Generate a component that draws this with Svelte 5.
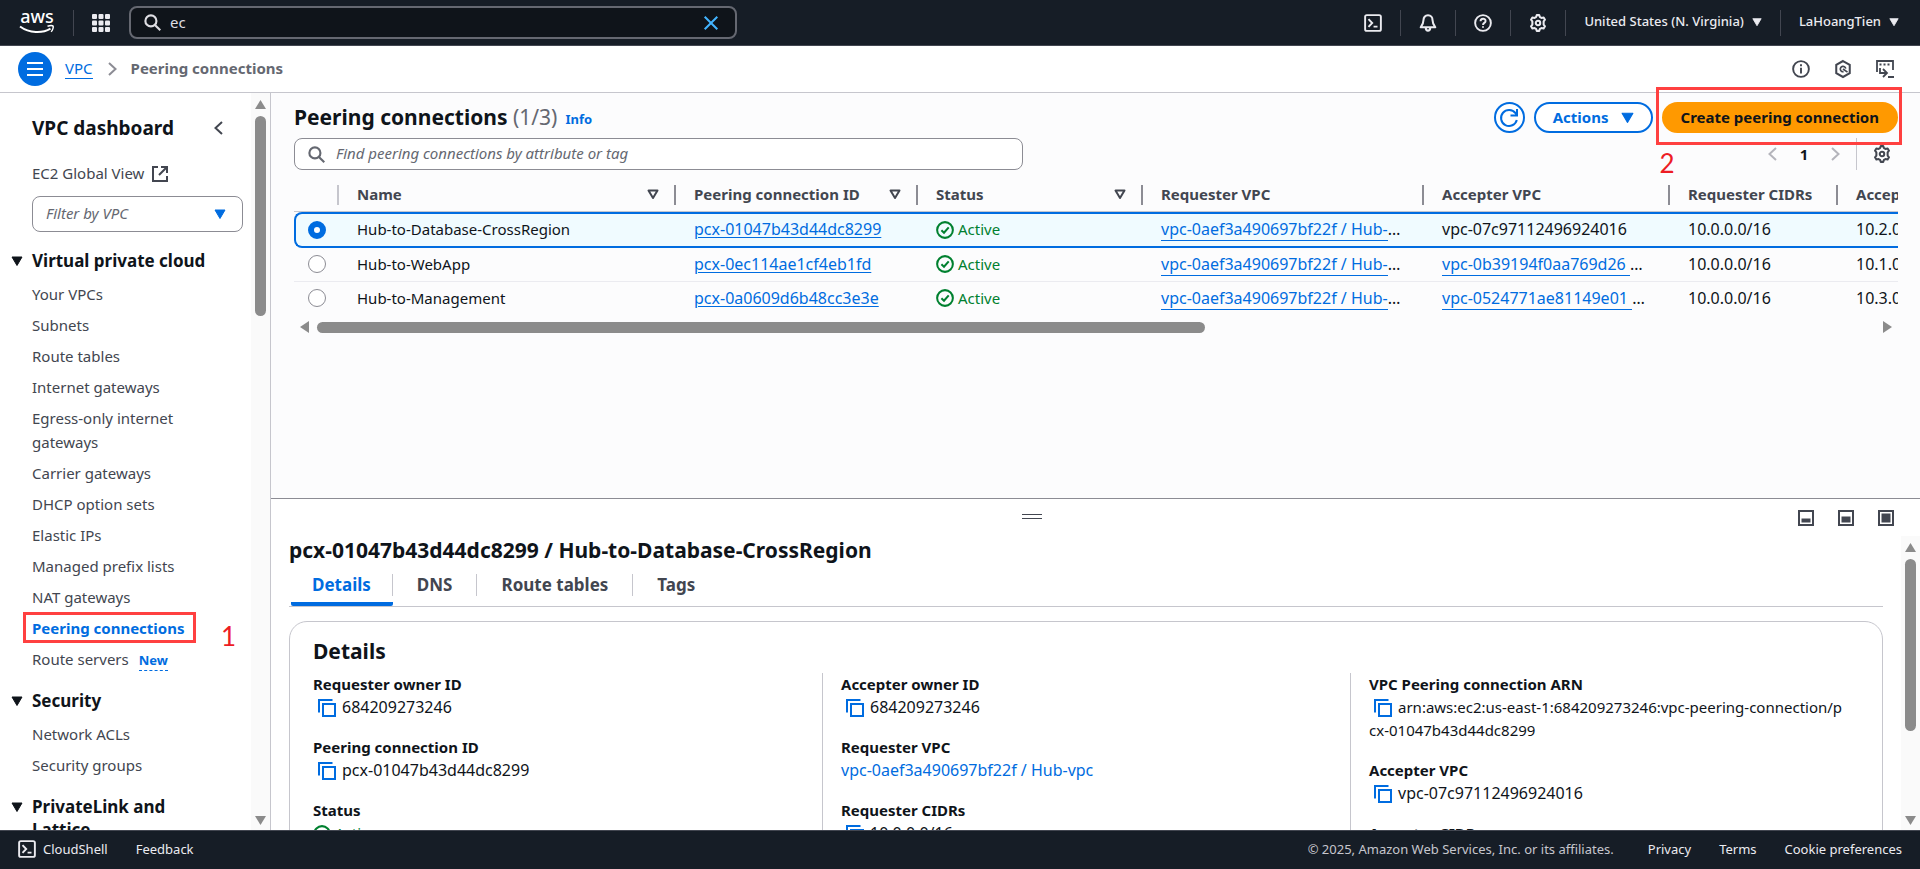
<script>
  const vpcLinks = [
    'Your VPCs', 'Subnets', 'Route tables', 'Internet gateways', 'Egress-only internet gateways',
    'Carrier gateways', 'DHCP option sets', 'Elastic IPs', 'Managed prefix lists', 'NAT gateways',
    'Peering connections', 'Route servers'
  ];
  const securityLinks = ['Network ACLs', 'Security groups'];
  const rows = [
    { name: 'Hub-to-Database-CrossRegion', id: 'pcx-01047b43d44dc8299', accepter: 'vpc-07c97112496924016', linked: false, cidr: '10.2.0.0/16' },
    { name: 'Hub-to-WebApp', id: 'pcx-0ec114ae1cf4eb1fd', accepter: 'vpc-0b39194f0aa769d26', linked: true, cidr: '10.1.0.0/16' },
    { name: 'Hub-to-Management', id: 'pcx-0a0609d6b48cc3e3e', accepter: 'vpc-0524771ae81149e01', linked: true, cidr: '10.3.0.0/16' }
  ];
  const columns = [
    { label: 'Name', sort: true },
    { label: 'Peering connection ID', sort: true },
    { label: 'Status', sort: true },
    { label: 'Requester VPC' },
    { label: 'Accepter VPC' },
    { label: 'Requester CIDRs' },
    { label: 'Accepter CIDRs' }
  ];
  const tabs = ['Details', 'DNS', 'Route tables', 'Tags'];
  const details = [
    [
      { label: 'Requester owner ID', value: '684209273246', kind: 'copy' },
      { label: 'Peering connection ID', value: 'pcx-01047b43d44dc8299', kind: 'copy' },
      { label: 'Status', value: 'Active', kind: 'status' }
    ],
    [
      { label: 'Accepter owner ID', value: '684209273246', kind: 'copy' },
      { label: 'Requester VPC', value: 'vpc-0aef3a490697bf22f / Hub-vpc', kind: 'link' },
      { label: 'Requester CIDRs', value: '10.0.0.0/16', kind: 'copy' }
    ],
    [
      { label: 'VPC Peering connection ARN', value: 'arn:aws:ec2:us-east-1:684209273246:vpc-peering-connection/pcx-01047b43d44dc8299', kind: 'copy', long: true },
      { label: 'Accepter VPC', value: 'vpc-07c97112496924016', kind: 'copy' },
      { label: 'Accepter CIDRs', value: '10.2.0.0/16', kind: 'copy' }
    ]
  ];
  let selected = $state(0);
  let query = $state('ec');
  let tab = $state('Details');
</script>

{#snippet gear()}
  <svg class="icon" viewBox="0 0 16 16" fill="none" stroke="currentColor" stroke-width="1.8" stroke-linejoin="round">
    <path d="M6.300 2.700 6.900 1h2.200l.6 1.700 1.400.8 1.900-.4 1.200 2L13 6.600v2.800l1.200 1.500-1.200 2-1.900-.4-1.400.8-.6 1.700H6.900l-.6-1.700-1.400-.8-1.900.4-1.200-2L3 9.400V6.600L1.800 5.100 3 3.100l1.900.4z" />
    <circle cx="8" cy="8" r="2" />
  </svg>
{/snippet}

{#snippet shell()}
  <svg class="icon" viewBox="0 0 16 16" fill="none" stroke="currentColor" stroke-width="1.7">
    <rect x="1" y="1" width="14" height="14" rx="1.5" />
    <path d="M4 4.500 7.300 8 4 11.500M8.500 11.200H12" />
  </svg>
{/snippet}

{#snippet glass()}
  <svg class="icon" viewBox="0 0 16 16" fill="none" stroke="currentColor" stroke-width="2">
    <circle cx="6.500" cy="6.500" r="5.200" />
    <path d="m10.300 10.300 5 5" />
  </svg>
{/snippet}

{#snippet caret(w)}
  <svg width={w} height={w} viewBox="0 0 12 12" fill="currentColor" stroke="currentColor" stroke-linejoin="round"><path d="M1 2h10L6 10.500z" /></svg>
{/snippet}

{#snippet check()}
  <svg class="icon" viewBox="0 0 16 16" fill="none" stroke="currentColor" stroke-width="1.8">
    <circle cx="8" cy="8" r="7" />
    <path d="m4.800 8.200 2.300 2.200 4.200-4.800" />
  </svg>
{/snippet}

{#snippet copy()}
  <button class="copy" aria-label="Copy">
    <svg class="icon" viewBox="0 0 18 18" fill="none" stroke="currentColor" stroke-width="2">
      <path d="M1 13.500V1h13.500" />
      <rect x="5" y="5" width="12" height="12" />
    </svg>
  </button>
{/snippet}

{#snippet vbar()}
  <div class="vbar" aria-hidden="true">
    <svg width="13" height="11" viewBox="0 0 13 11"><path d="M6.500 1 12 10H1z" /></svg>
    <i></i>
    <svg width="13" height="11" viewBox="0 0 13 11"><path d="M6.500 10 12 1H1z" /></svg>
  </div>
{/snippet}

<div class="app">
  <header class="top">
    <a class="aws" href="#home" aria-label="AWS home">
      <svg width="36" height="24" viewBox="0 0 36 24">
        <text x="18" y="12" text-anchor="middle" font-size="18" font-weight="500" fill="#fff">aws</text>
        <path d="M1 15.500c9.500 7 22.500 7 30.500 2.200" fill="none" stroke="#fff" stroke-width="2" />
        <path d="M28.500 15.300c2.500-.9 5-.8 5.600-.2.500.8-.3 4-2 5.700" fill="none" stroke="#fff" stroke-width="1.5" />
      </svg>
    </a>
    <span class="sep"></span>
    <button class="apps" aria-label="Services">
      <svg width="18" height="18" viewBox="0 0 18 18" fill="currentColor">
        {#each [0, 6.5, 13] as y}{#each [0, 6.5, 13] as x}<rect {x} {y} width="5" height="5" rx="1" />{/each}{/each}
      </svg>
    </button>
    <label class="global-search">
      {@render glass()}
      <input type="text" aria-label="Search" bind:value={query} />
      <button aria-label="Clear search">
        <svg width="14" height="14" viewBox="0 0 14 14" stroke="currentColor" stroke-width="2"><path d="m.7.7 12.600 12.600M13.300.7.7 13.300" /></svg>
      </button>
    </label>
    <nav class="utilities">
      <button aria-label="CloudShell">{@render shell()}</button>
      <span class="sep"></span>
      <button aria-label="Notifications">
        <svg class="icon" viewBox="0 0 16 16" fill="none" stroke="currentColor" stroke-width="1.8" stroke-linejoin="round">
          <path d="M8 1.200c-2.600 0-4 1.800-4 4.200 0 3-.8 4.200-2.500 6.400h13C12.800 9.600 12 8.400 12 5.400c0-2.400-1.400-4.200-4-4.200zM6 12.300c.2 3.300 3.800 3.300 4 0" />
        </svg>
      </button>
      <span class="sep"></span>
      <button aria-label="Support">
        <svg class="icon" viewBox="0 0 16 16" fill="none" stroke="currentColor" stroke-width="1.7">
          <circle cx="8" cy="8" r="7" />
          <path d="M5.800 6.500C5.800 3.500 10.300 3.600 10.300 6.200 10.300 7.900 8 7.900 8 9.700M8 10.800v1.500" />
        </svg>
      </button>
      <span class="sep"></span>
      <button aria-label="Settings">{@render gear()}</button>
      <span class="sep"></span>
      <button class="menu">United States (N. Virginia) {@render caret(10)}</button>
      <span class="sep"></span>
      <button class="menu">LaHoangTien {@render caret(10)}</button>
    </nav>
  </header>

  <div class="crumbs">
    <button class="burger" aria-label="Open navigation">
      <svg width="16" height="14" viewBox="0 0 16 14" stroke="currentColor" stroke-width="2"><path d="M0 1h16M0 7h16M0 13h16" /></svg>
    </button>
    <a href="#vpc">VPC</a>
    <svg class="chevron" width="9" height="14" viewBox="0 0 9 14"><path d="m1 1 6.500 6L1 13" /></svg>
    <b>Peering connections</b>
    <div class="tools">
      <button aria-label="Info">
        <svg class="icon" viewBox="0 0 16 16" fill="none" stroke="currentColor" stroke-width="1.7"><circle cx="8" cy="8" r="7" /><path d="M8 3.800v1.700M8 6.800v5.200" /></svg>
      </button>
      <button aria-label="Amazon Q">
        <svg class="icon" viewBox="0 0 16 16" fill="none" stroke="currentColor" stroke-width="1.8"><path d="M8 .9 14 4.300v7.400L8 15.100 2 11.700V4.300z" /><path d="M8.500 10.400a2.400 2.400 0 1 1 1.900-2.700M8 8l4 2.800" stroke-width="1.5" /></svg>
      </button>
      <button aria-label="CloudShell drawer">
        <svg class="icon" viewBox="0 0 18 18" fill="none" stroke="currentColor" stroke-width="1.8"><path d="M1 12V1h16v9M3.500 4.500h2M7.500 4.500h2M11.500 4.500h2M4 8v5h6M7 9l4 4-4 4M12 17h6" /></svg>
      </button>
    </div>
  </div>

  <div class="body">
    <aside>
      <div class="side">
        <div class="side-head">
          <h2>VPC dashboard</h2>
          <button aria-label="Close navigation"><svg class="chevron" width="9" height="14" viewBox="0 0 9 14"><path d="M8 1 1.500 7 8 13" /></svg></button>
        </div>
        <a class="global" href="#global">EC2 Global View
          <svg width="16" height="16" viewBox="0 0 16 16" fill="none" stroke="currentColor" stroke-width="2"><path d="M6 1H1v14h14v-5M9 1h6v6M14.500 1.500 7 9" /></svg>
        </a>
        <button class="filter"><i>Filter by VPC</i>{@render caret(12)}</button>
        <h3>{@render caret(12)}Virtual private cloud</h3>
        <ul>
          {#each vpcLinks as item}
            <li class:current={item === 'Peering connections'}>
              <a href="#nav">{item}</a>
              {#if item === 'Route servers'}<button class="new">New</button>{/if}
              {#if item === 'Peering connections'}<span class="mark box"></span><span class="mark one">1</span>{/if}
            </li>
          {/each}
        </ul>
        <h3>{@render caret(12)}Security</h3>
        <ul>
          {#each securityLinks as item}<li><a href="#nav">{item}</a></li>{/each}
        </ul>
        <h3>{@render caret(12)}PrivateLink and Lattice</h3>
      </div>
      {@render vbar()}
    </aside>

    <main>
      <section class="list">
        <div class="head">
          <h1>Peering connections <span>(1/3)</span></h1>
          <a class="info" href="#info">Info</a>
          <div class="actions">
            <button class="pill round" aria-label="Refresh">
              <svg width="20" height="20" viewBox="0 0 20 20" fill="none" stroke="currentColor" stroke-width="2"><path d="M17.800 12A8 8 0 1 1 16.500 5.200L18 7M18 1v6.500h-6.500" /></svg>
            </button>
            <button class="pill">Actions {@render caret(13)}</button>
            <div class="primary-wrap">
              <button class="pill primary">Create peering connection</button>
              <span class="mark box"></span><span class="mark two">2</span>
            </div>
          </div>
        </div>
        <div class="tool-row">
          <label class="search">{@render glass()}<input type="text" aria-label="Find peering connections" placeholder="Find peering connections by attribute or tag" /></label>
          <div class="pager">
            <button aria-label="Previous page"><svg class="chevron" width="9" height="14" viewBox="0 0 9 14"><path d="M8 1 1.500 7 8 13" /></svg></button>
            <button class="page">1</button>
            <button aria-label="Next page"><svg class="chevron" width="9" height="14" viewBox="0 0 9 14"><path d="m1 1 6.500 6L1 13" /></svg></button>
            <span class="line"></span>
            <button class="prefs" aria-label="Preferences">{@render gear()}</button>
          </div>
        </div>
        <div class="table-wrap">
          <table>
            <colgroup><col class="c0" /><col class="c1" /><col class="c2" /><col class="c3" /><col class="c4" /><col class="c5" /><col class="c6" /><col class="c7" /></colgroup>
            <thead>
              <tr>
                <th aria-label="Selection"></th>
                {#each columns as col}
                  <th><div>{col.label}
                    {#if col.sort}<svg width="12" height="11" viewBox="0 0 12 11" fill="none" stroke="currentColor" stroke-width="2" stroke-linejoin="round"><path d="M1.500 1.500h9L6 9z" /></svg>{/if}
                  </div></th>
                {/each}
              </tr>
            </thead>
            <tbody>
              {#each rows as row, i}
                <tr class:selected={selected === i}>
                  <td><input type="radio" name="row" aria-label={row.name} value={i} bind:group={selected} /></td>
                  <td>{row.name}</td>
                  <td class="id"><a class="plain" href="#pcx">{row.id}</a></td>
                  <td><span class="ok">{@render check()}Active</span></td>
                  <td class="id"><a class="under" href="#vpc">vpc-0aef3a490697bf22f / Hub-</a>…</td>
                  <td class="id">{#if row.linked}<a class="under" href="#vpc">{row.accepter}&nbsp;</a>…{:else}{row.accepter}{/if}</td>
                  <td class="id">10.0.0.0/16</td>
                  <td class="id">{row.cidr}</td>
                </tr>
              {/each}
            </tbody>
          </table>
        </div>
        <div class="hbar" aria-hidden="true">
          <svg width="9" height="12" viewBox="0 0 9 12"><path d="M0 6 9 0v12z" /></svg>
          <span><i></i></span>
          <svg width="9" height="12" viewBox="0 0 9 12"><path d="M9 6 0 0v12z" /></svg>
        </div>
      </section>

      <section class="panel">
        <div class="panel-bar">
          <span></span>
          <span class="handle"></span>
          <div class="sizes">
            {#each [9, 7, 4] as y}
              <button aria-label="Panel size">
                <svg width="16" height="16" viewBox="0 0 16 16"><rect x="1" y="1" width="14" height="14" fill="none" stroke="currentColor" stroke-width="2" /><rect x="3.500" y={y - 0.5} width="9" height={13 - y} fill="currentColor" /></svg>
              </button>
            {/each}
          </div>
        </div>
        <div class="panel-body">
          <div class="panel-content">
            <h1>pcx-01047b43d44dc8299 / Hub-to-Database-CrossRegion</h1>
            <div class="tabs" role="tablist">
              {#each tabs as t}
                <button role="tab" aria-selected={tab === t} class:active={tab === t} onclick={() => (tab = t)}><span>{t}</span></button>
              {/each}
            </div>
            <div class="card">
              <h1>Details</h1>
              <div class="cols">
                {#each details as group}
                  <dl>
                    {#each group as d}
                      <div>
                        <dt>{d.label}</dt>
                        <dd class:long={d.long}>
                          {#if d.kind === 'copy'}{@render copy()}{d.value}
                          {:else if d.kind === 'link'}<a href="#vpc">{d.value}</a>
                          {:else}<span class="ok">{@render check()}{d.value}</span>{/if}
                        </dd>
                      </div>
                    {/each}
                  </dl>
                {/each}
              </div>
            </div>
          </div>
          {@render vbar()}
        </div>
      </section>
    </main>
  </div>

  <footer>
    <button>{@render shell()}CloudShell</button>
    <a href="#feedback">Feedback</a>
    <span>© 2025, Amazon Web Services, Inc. or its affiliates.</span>
    <a href="#privacy">Privacy</a>
    <a href="#terms">Terms</a>
    <a href="#cookies">Cookie preferences</a>
  </footer>
</div>

<style>
  :global(body) { margin: 0; }
  * { box-sizing: border-box; }
  .app {
    height: 100vh;
    display: grid;
    grid-template-columns: minmax(0, 1fr);
    grid-template-rows: 46px 47px minmax(0, 1fr) 39px;
    font: 15px/23px "Noto Sans", "Open Sans", sans-serif;
    color: #0f141a;
    background: #fff;
    overflow: hidden;
  }
  button, input { font: inherit; color: inherit; background: none; border: 0; padding: 0; margin: 0; }
  button { display: inline-flex; align-items: center; justify-content: center; cursor: pointer; }
  input { outline: 0; min-width: 0; }
  a { color: #006ce0; text-decoration: none; }
  h1, h2, h3, ul, dl, dd { margin: 0; padding: 0; }
  svg { flex: none; overflow: visible; }
  .icon { width: 18px; height: 18px; }
  .chevron { fill: none; stroke: currentColor; stroke-width: 2; }

  .top { display: flex; align-items: center; background: #161d26; color: #ebebf0; border-bottom: 1px solid #424650; padding: 0 21px 0 19px; font-size: 13px; }
  .aws { display: flex; margin-right: 18px; }
  .sep { width: 1px; height: 26px; background: #424650; }
  .apps { margin: 0 19px 0 18px; }
  .global-search { flex: 0 1 608px; height: 33px; display: flex; align-items: center; gap: 9px; padding: 0 17px 0 13px; border: 2px solid #656871; border-radius: 8px; background: #0f141a; color: #dedee3; font-size: 15px; }
  .global-search input { flex: 1; }
  .global-search button { color: #42b4ff; }
  .utilities { margin-left: auto; display: flex; align-items: center; gap: 18px; }
  .menu { gap: 8px; font-weight: 500; padding-bottom: 2px; }

  .crumbs { display: flex; align-items: center; padding: 0 26px 0 18px; border-bottom: 1px solid #c6c6cd; color: #656871; font-size: 15px; }
  .burger { width: 34px; height: 34px; border-radius: 50%; background: #006ce0; color: #fff; margin-right: 13px; }
  .crumbs a { border-bottom: 1px solid; line-height: 20px; }
  .crumbs > b, .crumbs > a { margin-bottom: 2px; }
  .crumbs > .chevron { margin: 0 14px 0 15px; color: #8c8c94; }
  .tools { margin-left: auto; display: flex; gap: 24px; color: #424650; }

  .body { display: grid; grid-template-columns: 271px minmax(0, 1fr); min-height: 0; }
  aside { display: flex; border-right: 1px solid #c6c6cd; min-height: 0; overflow: hidden; }
  .side { flex: 1; padding: 21px 8px 0 32px; color: #424650; }
  .side-head { display: flex; justify-content: space-between; align-items: center; padding-right: 20px; }
  h2 { font-size: 19px; line-height: 28px; color: #0f141a; }
  .global { display: flex; align-items: center; gap: 8px; color: inherit; margin-top: 20px; }
  .filter { width: 100%; height: 36px; margin-top: 11px; padding: 0 16px 0 13px; justify-content: space-between; border: 1px solid #8c8c94; border-radius: 8px; background: #fff; color: #006ce0; }
  .filter i { color: #656871; }
  h3 { display: flex; align-items: flex-start; gap: 9px; margin: 17px 32px 0 -21px; font-size: 17px; line-height: 23px; color: #0f141a; }
  h3 :global(svg) { margin-top: 6px; }
  ul { list-style: none; display: grid; gap: 7px; margin-top: 10px; line-height: 24px; }
  li { position: relative; padding-right: 48px; }
  li a { color: inherit; }
  li.current { padding-right: 0; }
  li.current a { color: #006ce0; font-weight: 700; }
  ul + h3 { margin-top: 18px; }
  .new { margin-left: 6px; font-size: 13px; line-height: 20px; font-weight: 700; color: #006ce0; border-bottom: 1px dashed; }

  .vbar { flex: none; width: 19px; display: flex; flex-direction: column; align-items: center; gap: 6px; padding: 6px 0 4px; background: #fafafa; }
  .vbar svg, .hbar svg { fill: #8b8b8b; }
  .vbar i { width: 11px; height: 200px; border-radius: 6px; background: #8b8b8b; }
  .vbar svg:last-child { margin-top: auto; }

  main { display: grid; grid-template-columns: minmax(0, 1fr); grid-template-rows: minmax(0, 55fr) minmax(0, 45fr); min-height: 0; }
  .list { background: #fcfcfd; padding: 9px 22px 0 23px; }
  .head { display: flex; align-items: center; height: 31px; }
  h1 { font-size: 21px; line-height: 28px; font-weight: 700; }
  .head h1 { margin-bottom: 2px; }
  .head h1 span { font-weight: 400; color: #656871; }
  .info { margin: 4px 0 0 8px; font-size: 13px; font-weight: 700; }
  .actions { margin-left: auto; display: flex; gap: 9px; }
  .pill { height: 31px; border: 2px solid #006ce0; border-radius: 16px; padding: 0 17px; gap: 12px; font-weight: 700; color: #006ce0; background: #fff; white-space: nowrap; }
  .round { width: 31px; padding: 0; }
  .primary-wrap { position: relative; }
  .primary { border-color: #f90; background: #f90; color: #0f141a; }
  .mark { position: absolute; pointer-events: none; color: #ed1c24; font: 26px/28px Lato, sans-serif; }
  .box { border: 3px solid #ff4040; }
  .primary-wrap .box { inset: -15px -4px -12px -6px; z-index: 1; }
  .two { left: -2px; top: 47px; }
  li .box { inset: -4px 47px -3px -9px; }
  .one { right: 7px; top: 6px; }

  .tool-row { display: flex; align-items: center; margin-top: 5px; height: 32px; }
  .search { width: 729px; flex: 0 1 auto; height: 32px; display: flex; align-items: center; gap: 11px; padding: 0 13px; border: 1px solid #8c8c94; border-radius: 8px; background: #fff; color: #656871; }
  .search input { flex: 1; }
  .search input, .filter i { margin-bottom: 2px; }
  .search :global(.icon), .global-search :global(.icon) { width: 17px; height: 17px; }
  .search input::placeholder { font-style: italic; color: #656871; opacity: 1; }
  .pager { margin-left: auto; display: flex; align-items: center; color: #b4b4bb; padding-right: 7px; }
  .page { color: #0f141a; font-weight: 700; width: 54px; }
  .line { width: 1px; height: 32px; background: #c6c6cd; margin: 0 16px; }
  .prefs { color: #424650; }

  .table-wrap { overflow: hidden; }
  table { table-layout: fixed; width: 1720px; border-collapse: separate; border-spacing: 0; }
  .c0 { width: 43px; } .c1 { width: 337px; } .c2 { width: 242px; } .c3 { width: 225px; }
  .c4 { width: 281px; } .c5 { width: 246px; } .c6 { width: 168px; }
  th { height: 42px; padding: 8px 0 0; border-bottom: 1px solid #c6c6cd; text-align: left; color: #424650; }
  th div { display: flex; align-items: center; justify-content: space-between; height: 20px; padding: 0 15px 0 18px; border-left: 2px solid #8c8c94; }
  th:nth-child(2) div { border-color: #c6c6cd; }
  td { height: 34px; padding: 0 0 1px 20px; border-bottom: 1px solid #ebebf0; white-space: nowrap; }
  td:first-child { padding-left: 14px; }
  tr:last-child td { border-color: transparent; }
  tr.selected td { height: 36px; background: #f0fbff; border-top: 2px solid #006ce0; border-bottom: 2px solid #006ce0; }
  tr.selected td:first-child { border-left: 2px solid #006ce0; border-radius: 8px 0 0 8px; padding-left: 12px; }
  .id { font-size: 16px; }
  .plain { text-decoration: underline; text-underline-offset: 2px; }
  .under { border-bottom: 1px solid; }
  input[type="radio"] { appearance: none; display: block; width: 18px; height: 18px; border: 1px solid #8c8c94; border-radius: 50%; background: #fff; }
  input[type="radio"]:checked { border: 6px solid #006ce0; }
  .ok { display: flex; align-items: center; gap: 4px; color: #00802f; }

  .hbar { display: flex; align-items: center; gap: 8px; padding: 0 6px; margin-top: 5px; height: 12px; }
  .hbar span { flex: 1; height: 11px; }
  .hbar i { display: block; width: 57%; height: 11px; border-radius: 6px; background: #8b8b8b; }

  .panel { display: flex; flex-direction: column; border-top: 1px solid #8c8c94; background: #fff; min-height: 0; }
  .panel-bar { flex: none; display: grid; grid-template-columns: 1fr 20px 1fr; align-items: center; height: 37px; color: #424650; }
  .handle { height: 5px; margin-bottom: 2px; margin-left: -64px; margin-right: 64px; border: solid #424650; border-width: 1px 0; }
  .sizes { display: flex; gap: 24px; justify-content: flex-end; padding-right: 26px; }
  .panel-body { flex: 1; display: flex; min-height: 0; overflow: hidden; }
  .panel-body :global(.vbar i) { height: 172px; }
  .panel-content { flex: 1; padding: 0 18px; min-width: 0; }
  .tabs { display: flex; border-bottom: 1px solid #c6c6cd; padding: 8px 0 0 2px; }
  .tabs button { height: 34px; align-items: flex-start; font-size: 17px; font-weight: 700; color: #424650; border-bottom: 4px solid transparent; }
  .tabs span { line-height: 22px; margin-top: 2px; padding: 0 24px; border-right: 1px solid #c6c6cd; }
  .tabs button:first-child span { padding: 0 21px; }
  .tabs button:last-child span { border: 0; }
  .tabs button.active { color: #006ce0; border-bottom-color: #006ce0; border-radius: 2px; }
  .card { margin-top: 14px; border: 1px solid #c6c6cd; border-radius: 18px; padding: 15px 22px 40px 23px; }
  .cols { display: grid; grid-template-columns: repeat(3, minmax(0, 1fr)); column-gap: 37px; margin-top: 8px; }
  dl { display: grid; align-content: start; gap: 17px; }
  dl + dl { border-left: 1px solid #c6c6cd; margin-left: -19px; padding-left: 18px; }
  dt { font-weight: 700; }
  dd { font-size: 16px; word-break: break-all; }
  dd .ok, .long { font-size: 15px; }
  .long { padding-right: 14px; }
  .copy { margin: 0 6px 0 5px; vertical-align: -4px; color: #006ce0; }

  footer { display: flex; align-items: center; gap: 28px; background: #161d26; border-top: 1px solid #424650; color: #ebebf0; font-size: 13px; padding: 0 18px 2px; }
  footer button { gap: 7px; }
  footer a { color: inherit; }
  footer span { margin: 0 6px 0 auto; color: #c6c6cd; }
</style>
